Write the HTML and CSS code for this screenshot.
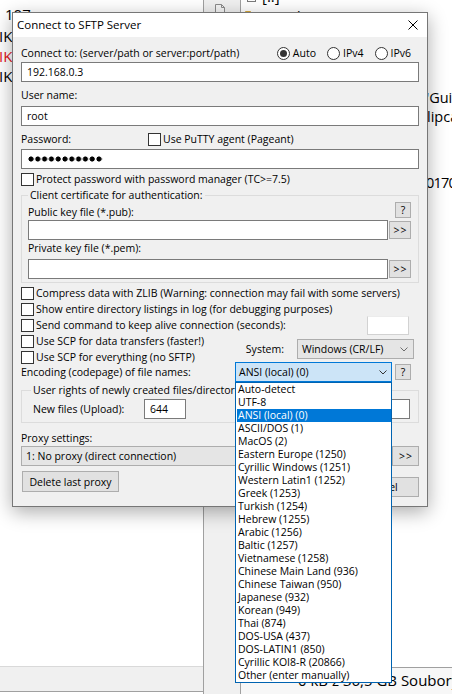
FILE: index.html
```html
<!DOCTYPE html>
<html>
<head>
<meta charset="utf-8">
<title>Connect to SFTP Server</title>
<link rel="stylesheet" href="styles.css">
</head>
<body>
<div class="desk">
  <div class="pane-left">
    <div class="lines-left">
      <div class="ln ln-num">107</div>
      <div class="ln ln-clip">IK</div>
      <div class="ln ln-clip red">IK</div>
      <div class="ln ln-clip">IK</div>
    </div>
    <div class="status-left"></div>
  </div>
  <div class="gutter">
    <svg class="gicon" width="14" height="14" viewBox="0 0 14 14"><path d="M2.5 0.5h6l3 3v10h-9z" fill="#f4f4f4" stroke="#8a8a8a"/><path d="M8.5 0.5v3h3" fill="none" stroke="#8a8a8a"/></svg>
  </div>
  <div class="pane-right">
    <div class="files">
      <div class="frow"><svg width="14" height="14" viewBox="0 0 14 14"><rect x="2.5" y="1.5" width="8" height="11" fill="#fff" stroke="#7a7a7a"/><path d="M4 5h5M4 8h5" stroke="#7a7a7a"/></svg><span>[..]</span></div>
      <div class="frow"><svg width="14" height="14" viewBox="0 0 14 14"><path d="M0.5 2.5h5l1.5 1.5h6.5v8.5h-13z" fill="#f3cd66" stroke="#d9a93a"/></svg><span>[windows]</span></div>
    </div>
    <div class="viewer">
      <div class="vl v1">'Guide to the Galaxy'</div>
      <div class="vl">lipcase</div>
      <div class="vl v3">01705</div>
    </div>
    <div class="status-right"><span class="st-a">0 kB z 36,5 GB</span> Soubory: 0 / 3</div>
  </div>
</div>

<div class="dialog">
  <div class="titlebar">
    <span class="title">Connect to SFTP Server</span>
    <svg class="close" width="10" height="10" viewBox="0 0 10 10"><path d="M0.5 0.5L9.5 9.5M9.5 0.5L0.5 9.5" stroke="#000" stroke-width="1"/></svg>
  </div>
  <div class="dbody">
    <div class="row r-connect">
      <span>Connect to: (server/path or server:port/path)</span>
      <div class="radios">
        <span class="opt"><span class="radio on"></span>Auto</span>
        <span class="opt"><span class="radio"></span>IPv4</span>
        <span class="opt"><span class="radio"></span>IPv6</span>
      </div>
    </div>
    <div class="edit e-host">192.168.0.3</div>
    <div class="lbl l-user">User name:</div>
    <div class="edit e-user">root</div>
    <div class="row r-pass"><span class="pass-lbl">Password:</span><span class="chk"></span><span class="chk-t">Use PuTTY agent (Pageant)</span></div>
    <div class="edit e-pass"><span class="dots"></span></div>
    <div class="row chkrow r-protect"><span class="chk"></span><span class="chk-t">Protect password with password manager (TC&gt;=7.5)</span></div>

    <fieldset class="grp g-cert">
      <legend>Client certificate for authentication:</legend>
      <div class="row r-pub"><span class="pub-lbl">Public key file (*.pub):</span><span class="btn b-help">?</span></div>
      <div class="row r-file"><div class="edit e-file"></div><span class="btn b-more">&gt;&gt;</span></div>
      <div class="lbl l-priv">Private key file (*.pem):</div>
      <div class="row r-file r-file2"><div class="edit e-file"></div><span class="btn b-more">&gt;&gt;</span></div>
    </fieldset>

    <div class="row chkrow c-first"><span class="chk"></span><span class="chk-t">Compress data with ZLIB (Warning: connection may fail with some servers)</span></div>
    <div class="row chkrow"><span class="chk"></span><span class="chk-t">Show entire directory listings in log (for debugging purposes)</span></div>
    <div class="row chkrow"><span class="chk"></span><span class="chk-t">Send command to keep alive connection (seconds):</span><span class="e-secs"></span></div>
    <div class="scp">
      <div class="scp-l">
        <div class="row chkrow"><span class="chk"></span><span class="chk-t">Use SCP for data transfers (faster!)</span></div>
        <div class="row chkrow"><span class="chk"></span><span class="chk-t">Use SCP for everything (no SFTP)</span></div>
      </div>
      <div class="sys">
        <span>System:</span>
        <div class="sel s-sys"><span>Windows (CR/LF)</span><svg class="chev" width="8" height="5" viewBox="0 0 8 5"><path d="M0.5 0.5L4 4L7.5 0.5" fill="none" stroke="#6d6d6d"/></svg></div>
      </div>
    </div>
    <div class="row r-enc">
      <span>Encoding (codepage) of file names:</span>
      <div class="sel s-enc"><span>ANSI (local) (0)</span><svg class="chev" width="8" height="5" viewBox="0 0 8 5"><path d="M0.5 0.5L4 4L7.5 0.5" fill="none" stroke="#333"/></svg></div>
      <span class="btn b-help b-help2">?</span>
    </div>

    <fieldset class="grp g-rights">
      <legend>User rights of newly created files/directories</legend>
      <div class="row r-rights">
        <span class="nf-lbl">New files (Upload):</span>
        <div class="edit e-644">644</div>
        <div class="edit e-755"></div>
      </div>
    </fieldset>

    <div class="lbl l-proxy">Proxy settings:</div>
    <div class="row r-proxy">
      <div class="sel s-proxy"><span>1: No proxy (direct connection)</span></div>
      <span class="btn b-pmore">&gt;&gt;</span>
    </div>
    <div class="row r-btns">
      <span class="btn b-del">Delete last proxy</span>
      <span class="btn b-cancel">Cancel</span>
    </div>
  </div>
</div>

<ul class="droplist">
  <li>Auto-detect</li>
  <li>UTF-8</li>
  <li class="hl">ANSI (local) (0)</li>
  <li>ASCII/DOS (1)</li>
  <li>MacOS (2)</li>
  <li>Eastern Europe (1250)</li>
  <li>Cyrillic Windows (1251)</li>
  <li>Western Latin1 (1252)</li>
  <li>Greek (1253)</li>
  <li>Turkish (1254)</li>
  <li>Hebrew (1255)</li>
  <li>Arabic (1256)</li>
  <li>Baltic (1257)</li>
  <li>Vietnamese (1258)</li>
  <li>Chinese Main Land (936)</li>
  <li>Chinese Taiwan (950)</li>
  <li>Japanese (932)</li>
  <li>Korean (949)</li>
  <li>Thai (874)</li>
  <li>DOS-USA (437)</li>
  <li>DOS-LATIN1 (850)</li>
  <li>Cyrillic KOI8-R (20866)</li>
  <li>Other (enter manually)</li>
</ul>
</body>
</html>
```
FILE: styles.css
```css
* { box-sizing: border-box; margin: 0; padding: 0; }
html, body { width: 452px; height: 694px; overflow: hidden; }
body {
  position: relative;
  background: #fff;
  color: #000;
  font-family: "Open Sans", "Noto Sans", "DejaVu Sans", sans-serif;
}

/* background application */
.desk { display: flex; height: 694px; }
.pane-left {
  width: 204px; flex: none;
  border-right: 1px solid #a0a0a0;
  display: flex; flex-direction: column;
  overflow: hidden;
}
.lines-left { flex: 1; padding-top: 4px; font-size: 15px; line-height: 20px; }
.ln { white-space: nowrap; height: 20px; }
.ln-num { padding-left: 5px; height: 22px; }
.ln-clip { margin-left: -1px; }
.red { color: #e2151b; }
.status-left {
  flex: none; height: 26px; margin-bottom: 2px;
  background: #f0f0f0;
  border-top: 1px solid #d9d9d9;
  border-bottom: 1px solid #a0a0a0;
}
.gutter { width: 36px; flex: none; background: #f0f0f0; padding: 4px 0 0 9px; }
.gicon { display: block; }
.pane-right {
  flex: 1; min-width: 0;
  border-left: 1px solid #a0a0a0;
  display: flex; flex-direction: column;
  overflow: hidden;
  font-size: 15px; line-height: 20px;
}
.files { margin-top: -14px; padding-left: 4px; }
.frow { height: 20px; display: flex; align-items: center; gap: 3px; white-space: nowrap; }
.frow svg { flex: none; }
.viewer { padding-left: 186px; white-space: nowrap; line-height: 19px; font-size: 14.5px; }
.vl { height: 19px; }
.v1 { margin-top: 62px; margin-left: -1px; }
.v3 { margin-top: 47px; margin-left: -1px; letter-spacing: -0.8px; }
.status-right {
  margin-top: auto; height: 27px; flex: none;
  border-top: 1px solid #a0a0a0;
  background: #f7f7f7;
  padding: 2px 0 0 3px;
  white-space: nowrap;
}
.st-a { display: inline-block; width: 153px; text-align: right; overflow: hidden; vertical-align: top; }

/* dialog */
.dialog {
  position: absolute; left: 12px; top: 12px;
  width: 416px; height: 495px;
  background: #f0f0f0;
  border: 1px solid #767676;
  box-shadow: 0 5px 18px rgba(0, 0, 0, 0.33);
  font-size: 10.5px; line-height: 14px;
}
.titlebar {
  height: 24px; background: #fff;
  display: flex; align-items: center;
  padding-left: 4px;
  font-size: 11.5px;
}
.close { margin-left: auto; margin-right: 9px; display: block; }
.dbody { padding: 0 8px; }
.row { display: flex; align-items: center; white-space: nowrap; }
.lbl { height: 14px; white-space: nowrap; }

.r-connect { margin-top: 9px; height: 14px; justify-content: space-between; }
.radios { display: flex; align-items: center; padding-right: 8px; }
.opt { display: flex; align-items: center; margin-left: 11px; }
.radio {
  width: 13px; height: 13px; flex: none;
  border: 1px solid #333; border-radius: 50%;
  background: #fff; margin-right: 3px;
  display: flex; align-items: center; justify-content: center;
}
.radio.on::after { content: ""; width: 7px; height: 7px; border-radius: 50%; background: #333; }

.edit {
  height: 20px; background: #fff;
  border: 1px solid #7a7a7a;
  padding-left: 5px; line-height: 18px;
  white-space: nowrap;
}
.e-host { margin-top: 2px; }
.l-user { margin-top: 6px; }
.e-user { margin-top: 4px; }
.r-pass { margin-top: 6px; height: 14px; }
.pass-lbl { width: 127px; flex: none; }
.e-pass { margin-top: 3px; display: flex; align-items: center; }
.dots {
  display: block; width: 75px; height: 6px; margin-left: 1px;
  background: radial-gradient(circle at 3px 3px, #000 2.2px, rgba(0,0,0,0) 2.9px) 0 0 / 6.8px 6px repeat-x;
}

.chk { width: 13px; height: 13px; flex: none; border: 1px solid #333; background: #fff; }
.chk-t { margin-left: 2px; }
.chkrow { height: 16px; }
.r-protect { margin-top: 2px; }

.grp { border: 1px solid #dcdcdc; min-inline-size: 0; }
.grp legend { padding: 0 2px; line-height: 14px; height: 14px; font-size: 10.5px; white-space: nowrap; }
.g-cert { margin-top: 1px; padding: 0 7px 3px 6px; }
.r-pub { height: 17px; justify-content: space-between; align-items: flex-start; }
.pub-lbl { align-self: flex-end; height: 14px; }
.btn {
  background: #e1e1e1; border: 1px solid #adadad;
  display: flex; align-items: center; justify-content: center;
  flex: none; white-space: nowrap;
}
.b-help { width: 16px; height: 16px; }
.r-file { margin-top: 1px; height: 20px; }
.r-file2 { margin-top: 4px; }
.e-file { width: 360px; flex: none; }
.b-more { width: 22px; height: 18px; margin-left: 1px; letter-spacing: 1px; padding-left: 1px; }
.l-priv { margin-top: 1px; }

.c-first { margin-top: 2px; }
.e-secs {
  width: 42px; height: 19px; flex: none;
  margin-left: auto; margin-right: 10px;
  background: #fff;
  border: 1px solid #d2d2d2; border-top-color: #ececec;
}
.scp { display: flex; align-items: center; }
.sys { margin-left: auto; margin-right: 5px; display: flex; align-items: center; }
.sel {
  height: 20px; background: #e1e1e1;
  border: 1px solid #adadad;
  display: flex; align-items: center;
  padding: 0 5px 0 4px;
  white-space: nowrap;
}
.chev { margin-left: auto; display: block; flex: none; }
.s-sys { width: 117px; margin-left: 13px; background: #e5e5e5; }
.r-enc { margin-top: -3px; height: 20px; padding-right: 8px; }
.s-enc { width: 157px; margin-left: auto; background: #cce4f7; border-color: #0078d7; padding-left: 3px; padding-right: 4px; }
.b-help2 { margin-left: 3px; }

.g-rights { margin-top: 1px; padding: 0 8px 3px 11px; }
.g-rights legend { margin-left: -2px; }
.r-rights { margin-top: 2px; height: 20px; }
.nf-lbl { width: 111px; flex: none; }
.e-644 { width: 42px; flex: none; }
.e-755 { width: 42px; flex: none; margin-left: auto; }

.l-proxy { margin-top: 8px; }
.r-proxy { margin-top: 1px; height: 20px; }
.s-proxy { flex: 1; background: #e5e5e5; }
.b-pmore { width: 27px; height: 20px; margin-left: 4px; letter-spacing: 1px; padding-left: 1px; }
.r-btns { margin-top: 5px; align-items: flex-start; }
.b-del { width: 97px; height: 21px; margin-left: 1px; }
.b-cancel { width: 75px; height: 20px; margin-left: auto; margin-top: 6px; }

/* open drop-down list */
.droplist {
  position: absolute; left: 235px; top: 382px;
  width: 157px;
  background: #fff;
  border: 1px solid #0063b1;
  padding-left: 1px;
  list-style: none;
  font-size: 10.5px; line-height: 13px;
}
.droplist li { height: 13px; padding-left: 1px; white-space: nowrap; }
.droplist li.hl { background: #0078d7; color: #fff; }
```
